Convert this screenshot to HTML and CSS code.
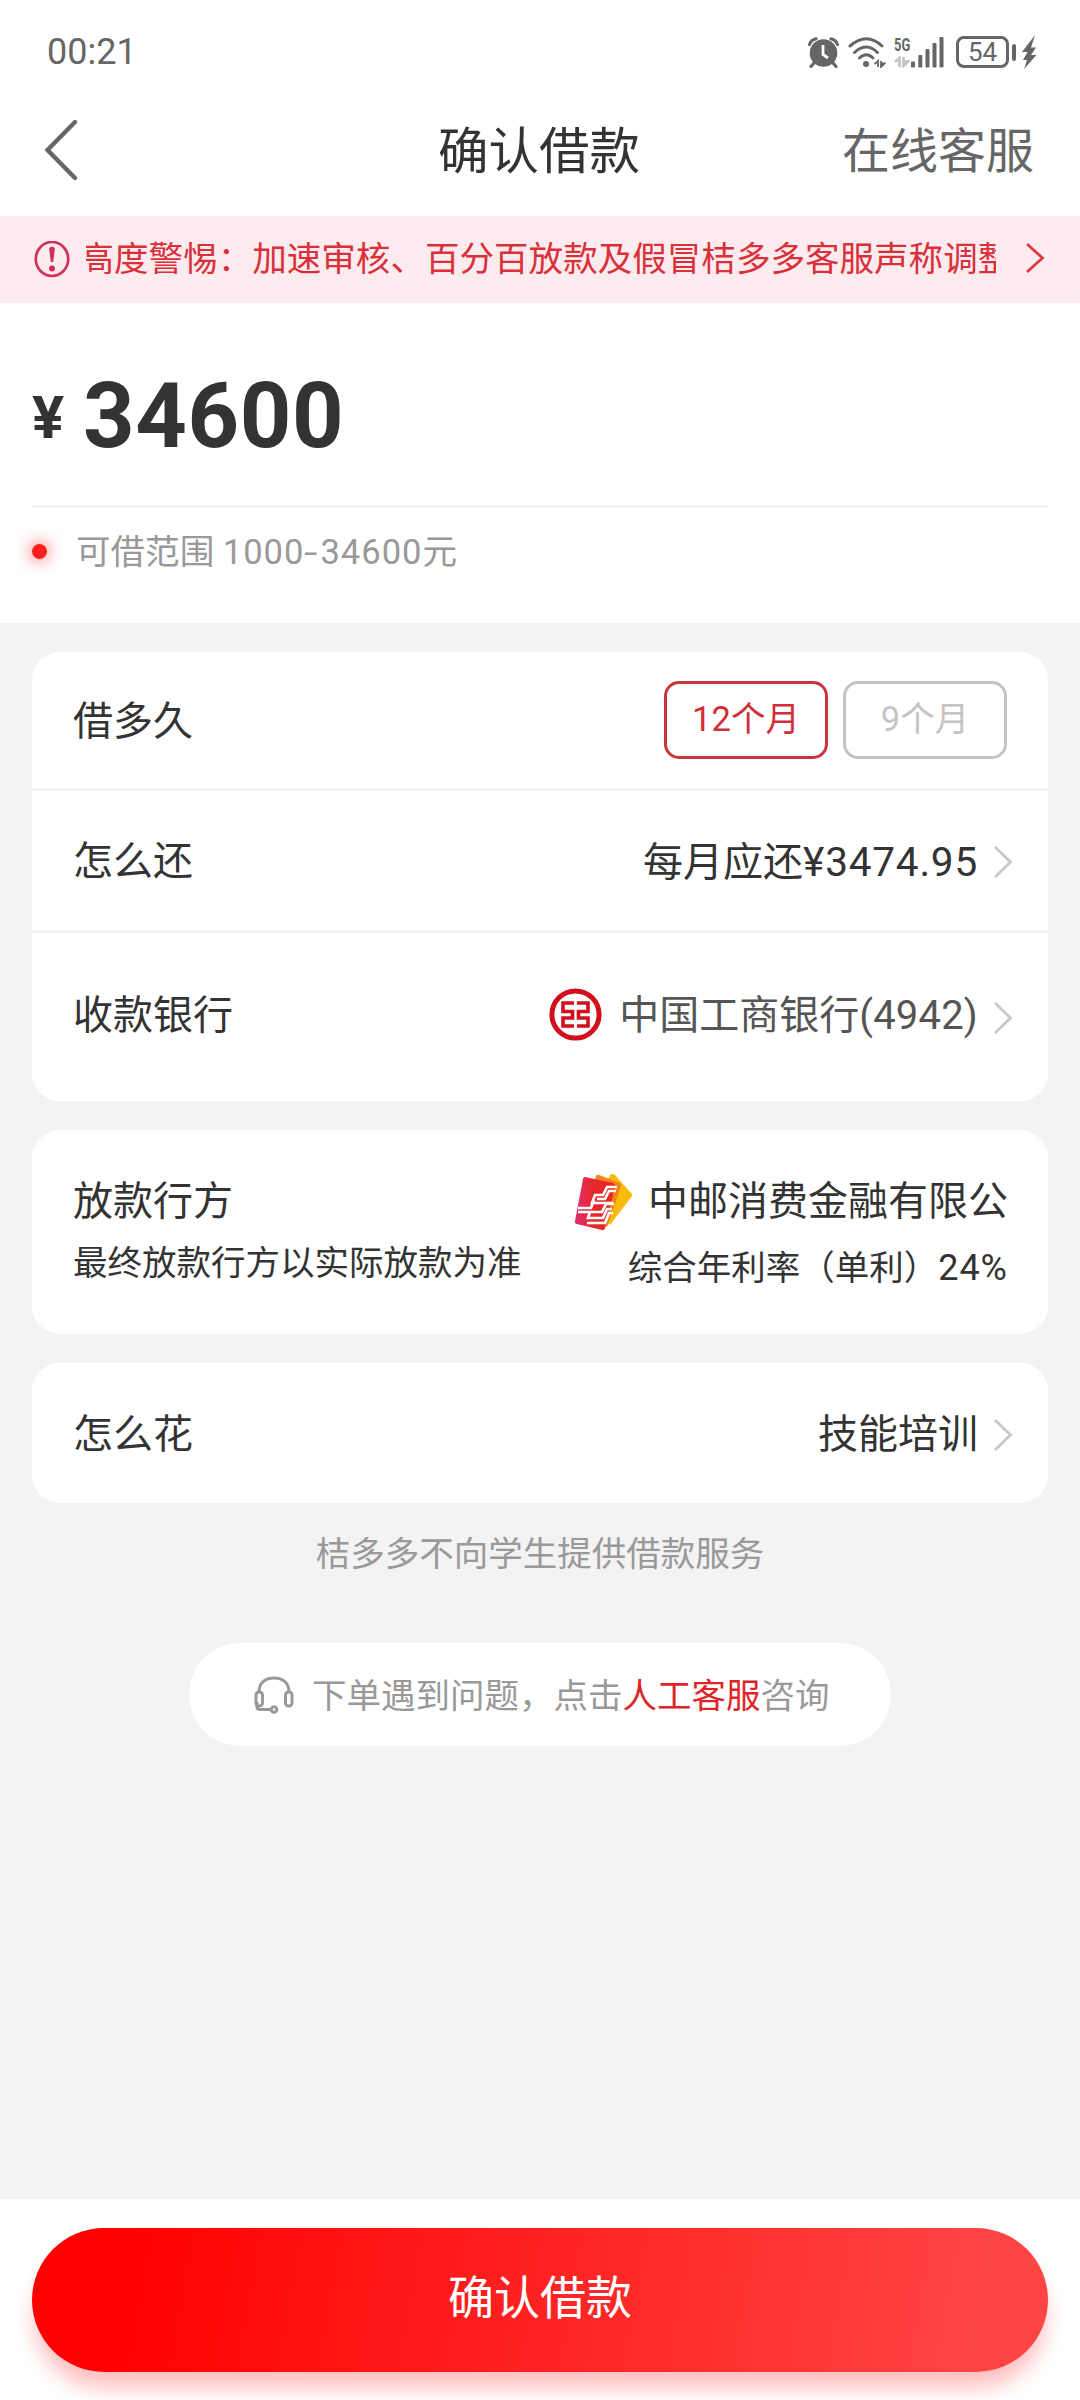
FILE: index.html
```html
<!DOCTYPE html>
<html lang="zh-CN">
<head>
<meta charset="utf-8">
<title>确认借款</title>
<link rel="stylesheet" href="styles.css">
</head>
<body>
<div class="page">
  <div class="status">
    <span class="time">00:21</span>
    <div class="status-icons">
      <svg class="alarm" width="31" height="31" viewBox="0 0 31 31">
        <circle cx="15.5" cy="16" r="13.8" fill="#666"/>
        <path d="M1.5 7.5Q3 3 8 1.8M29.500 7.500Q28 3 23 1.800M6 26l-3 3.500M25 26l3 3.500" stroke="#666" stroke-width="3.200" fill="none" stroke-linecap="round"/>
        <path d="M15 8v9.500l5 3.500" stroke="#fff" stroke-width="2.800" fill="none"/>
      </svg>
      <svg class="wifi" width="38" height="31" viewBox="0 0 38 31">
        <g fill="none" stroke="#666" stroke-width="3" stroke-linecap="round">
          <path d="M2 9Q18.500-5.500 34 9"/><path d="M6.500 15.500Q18.500 4.500 29.500 15.500"/><path d="M11.500 21Q18.500 14.500 25 21"/>
        </g>
        <circle cx="18" cy="27" r="3" fill="#666"/>
        <path d="M26.500 27l3.500-3v6M33 24v6l3.500-3.500h-3" fill="none" stroke="#666" stroke-width="1.800"/>
      </svg>
      <div class="net">
        <span class="net-label">5G</span>
        <svg width="16" height="12" viewBox="0 0 16 12"><path d="M1 6l4.500-4v9M9.500 1v9l4.500-4.500h-4" fill="none" stroke="#c4c4c4" stroke-width="2.600"/></svg>
      </div>
      <svg class="bars" width="34" height="31" viewBox="0 0 34 31">
        <g fill="#666"><rect x="0" y="24.500" width="4" height="6" rx="1"/><rect x="7.300" y="18" width="4" height="12.500" rx="1"/><rect x="14.500" y="12" width="4" height="18.500" rx="1"/><rect x="21.500" y="6" width="4" height="24.500" rx="1"/><rect x="28.500" y="0" width="4" height="30.500" rx="1"/></g>
      </svg>
      <span class="battery">54</span>
      <span class="nub"></span>
      <svg class="bolt" width="15" height="34" viewBox="0 0 15 34"><path d="M13 0L0 17h5.500L1 25h4L2 34 14.500 20H9L14 12.500H9z" fill="#666"/></svg>
    </div>
  </div>

  <header class="header">
    <svg class="back" width="36" height="64" viewBox="0 0 36 64"><path d="M33 4L5.500 32 33 60" fill="none" stroke="#666" stroke-width="4.400" stroke-linecap="round"/></svg>
    <h1 class="title">确认借款</h1>
    <span class="service">在线客服</span>
  </header>

  <div class="notice">
    <svg class="warn" width="36" height="38" viewBox="0 0 36 38"><ellipse cx="18" cy="18" rx="16.200" ry="17" fill="none" stroke="#cf3059" stroke-width="2.600"/><path d="M15.200 8q0-2.200 2.800-2.200t2.800 2.200l-1.600 13h-2.400z" fill="#cf3059"/><circle cx="18" cy="27.500" r="3" fill="#cf3059"/></svg>
    <div class="notice-text">高度警惕：加速审核、百分百放款及假冒桔多多客服声称调整</div>
    <svg class="notice-arrow" width="20" height="32" viewBox="0 0 20 32"><path d="M2 2l15.500 14L2 30" fill="none" stroke="#dc3a43" stroke-width="2.800"/></svg>
  </div>

  <section class="amount">
    <div class="sum"><span class="yen">¥</span><span class="value">34600</span></div>
    <div class="range"><span class="dot"></span><span class="range-text">可借范围 <span class="range-num">1000<span class="dash">-</span>34600</span>元</span></div>
  </section>

  <main class="content">
    <section class="card">
      <div class="row term">
        <span>借多久</span>
        <div class="chips"><span class="chip active">12个月</span><span class="chip">9个月</span></div>
      </div>
      <div class="row repay">
        <span>怎么还</span>
        <div class="val"><span>每月应还<span class="money">¥3474.95</span></span><svg class="arrow" width="20" height="34" viewBox="0 0 20 34"><path d="M2 2l15.500 15L2 32" fill="none" stroke="#c8c8c8" stroke-width="2.800"/></svg></div>
      </div>
      <div class="row bank">
        <span>收款银行</span>
        <div class="val gray">
          <svg class="icbc" width="53" height="53" viewBox="0 0 53 53">
            <circle cx="26.500" cy="26.500" r="23.600" fill="#fff" stroke="#d0101e" stroke-width="5"/>
            <g fill="none" stroke="#d0101e" stroke-width="3.600">
              <path d="M25 15H14v8.500h9.500v6.500H14v8h11"/>
              <path d="M28 15h11v8.500h-9.500v6.500H39v8H28"/>
            </g>
          </svg>
          <span>中国工商银行<span class="tail">(4942)</span></span>
          <svg class="arrow low" width="20" height="34" viewBox="0 0 20 34"><path d="M2 2l15.500 15L2 32" fill="none" stroke="#c8c8c8" stroke-width="2.800"/></svg>
        </div>
      </div>
    </section>

    <section class="card lender">
      <div class="lender-left">
        <span class="lender-main">放款行方</span>
        <span class="lender-sub">最终放款行方以实际放款为准</span>
      </div>
      <div class="lender-right">
        <div class="lender-main company">
          <svg class="post" width="60" height="58" viewBox="0 0 60 58">
            <defs><linearGradient id="red" x1="0" x2="1"><stop offset="0" stop-color="#e03070"/><stop offset=".45" stop-color="#e5282b"/><stop offset="1" stop-color="#e8291c"/></linearGradient></defs>
            <path d="M36 2q2-2 5 0l17 19q1 1 0 2L36 52 20 40z" fill="#fbbb0c"/>
            <path d="M22 3q1-2 3-1l21 8q2 1 1 3L33 54 12 44z" fill="#f58216"/>
            <path d="M9 6q0-2 2-2l28 6q3 1 2 4L31 55q-1 3-3 2L3 51q-3-1-2-3z" fill="url(#red)"/>
            <g fill="none" stroke="#fff" stroke-width="2.700"><path d="M43 14H33l-4 8h-8l-3 8h21"/><path d="M42 18h-7l-4 8h-8"/><path d="M4 35h13l3-8M4 39h24l4-8h8"/><path d="M16 39l-2 6h15l4-9h5"/><path d="M13 50h18l4-10h4"/></g>
          </svg>
          <span>中邮消费金融有限公</span>
        </div>
        <span class="lender-sub">综合年利率（单利）<span class="rate">24%</span></span>
      </div>
    </section>

    <section class="card">
      <div class="row usage">
        <span>怎么花</span>
        <div class="val"><span>技能培训</span><svg class="arrow" width="20" height="34" viewBox="0 0 20 34"><path d="M2 2l15.500 15L2 32" fill="none" stroke="#c8c8c8" stroke-width="2.800"/></svg></div>
      </div>
    </section>

    <p class="note">桔多多不向学生提供借款服务</p>

    <div class="help">
      <svg width="40" height="38" viewBox="0 0 40 38"><g fill="none" stroke="#999" stroke-width="3"><path d="M5 16C5 7 11 2 20 2s15 5 15 14"/><rect x="2" y="16" width="6.500" height="14" rx="3"/><rect x="31.500" y="16" width="6.500" height="14" rx="3"/><path d="M3 26v5q0 2.500 3 2.500h11"/><circle cx="20" cy="33.500" r="2.800"/></g></svg>
      <span class="help-text">下单遇到问题，点击<span class="link">人工客服</span>咨询</span>
    </div>
  </main>

  <footer class="footer"><button class="confirm">确认借款</button></footer>
</div>
</body>
</html>
```
FILE: styles.css
```css
* { box-sizing: border-box; }
body {
  margin: 0;
  background: #f3f3f3;
  color: #333;
  font-family: Roboto, "Noto Sans CJK SC", sans-serif;
}
svg { display: block; flex: none; }
.page {
  width: 1080px;
  height: 2400px;
  display: flex;
  flex-direction: column;
  overflow: hidden;
  white-space: nowrap;
}

.status {
  height: 84px;
  padding: 20px 43px 0 47px;
  background: #fff;
  display: flex;
  justify-content: space-between;
  align-items: center;
  color: #666;
}
.time { font-size: 36px; line-height: 40px; letter-spacing: 0; }
.status-icons { display: flex; align-items: center; }
.wifi { margin-left: 9px; }
.net { width: 16px; height: 31px; margin-left: 8px; display: flex; flex-direction: column; justify-content: space-between; }
.net-label { font-size: 19px; line-height: 15px; font-weight: 700; transform: scaleX(.68); transform-origin: left; }
.bars { margin-left: 1px; }
.battery {
  width: 53px;
  height: 32px;
  margin-left: 11px;
  border: 3px solid #666;
  border-radius: 8px;
  font-size: 26px;
  line-height: 27px;
  text-align: center;
}
.nub { width: 4px; height: 17px; margin-left: 3px; border-radius: 2px; background: #666; }
.bolt { margin-left: 6px; }

.header {
  height: 132px;
  padding: 0 46px 0 42px;
  background: #fff;
  display: grid;
  grid-template-columns: 1fr auto 1fr;
  align-items: center;
}
.title { margin: 0; padding: 3px 0 0 2px; font-size: 50.500px; line-height: 60px; font-weight: 400; }
.service { justify-self: end; padding-top: 3px; font-size: 48px; line-height: 60px; color: #666; }

.notice {
  height: 87px;
  padding: 0 35px 0 34px;
  background: #feebef;
  display: flex;
  align-items: center;
  color: #d9303a;
}
.notice-text {
  width: 911px;
  margin-left: 16px;
  padding-bottom: 2px;
  overflow: hidden;
  text-indent: -6.500px;
  font-size: 34.550px;
  line-height: 48px;
}
.notice-arrow { margin: 0 0 4px 29px; }

.amount { height: 320px; padding: 0 32px; background: #fff; }
.sum {
  height: 205px;
  padding-top: 61px;
  border-bottom: 3px solid #f3f3f3;
  display: flex;
  align-items: baseline;
  font-weight: 700;
  line-height: 106px;
}
.yen { width: 51px; font-size: 60px; position: relative; top: -9px; }
.value { font-size: 90px; letter-spacing: .6px; }
.range { height: 86px; display: flex; align-items: center; color: #999; font-size: 34.550px; }
.range-text { padding-bottom: 5px; }
.range-num { letter-spacing: 1px; }
.dash { display: inline-block; width: 16px; transform: scaleX(1.400); transform-origin: left; letter-spacing: 0; }
.dot { width: 15px; height: 15px; margin-right: 29px; border-radius: 50%; background: #ff1e1e; box-shadow: 0 0 16px 2px rgba(255, 40, 40, .6); }

.content { flex: 1; padding: 29px 32px 0; display: flex; flex-direction: column; align-items: stretch; }
.card { margin-bottom: 29px; border-radius: 28px; background: #fff; }
.row {
  padding: 3px 41px 0 41px;
  display: flex;
  align-items: center;
  justify-content: space-between;
  font-size: 40px;
  line-height: 56px;
}
.row + .row { border-top: 3px solid #f3f3f3; }
.term { height: 136px; }
.repay { height: 142px; }
.bank { height: 171px; padding-bottom: 5px; }
.usage { height: 140px; }
.chips { display: flex; gap: 15px; margin-top: -3px; }
.chip {
  width: 164px;
  height: 78px;
  border: 3px solid #c4c4c4;
  border-radius: 15px;
  color: #c4c4c4;
  font-size: 34.500px;
  line-height: 70px;
  text-align: center;
}
.chip.active { border-color: #c8353c; color: #d02f37; }
.val { display: flex; align-items: center; margin-right: -6px; }
.gray { color: #555; }
.money { letter-spacing: .8px; font-size: 40.500px; }
.arrow { margin-left: 15px; }
.low { margin-top: 4px; }
.icbc { margin: 0 17px 3px 0; }
.tail { letter-spacing: .2px; }

.lender { height: 204px; padding: 0 40px 0 41px; display: flex; justify-content: space-between; }
.lender-left, .lender-right { display: flex; flex-direction: column; padding-top: 44px; }
.lender-right { align-items: flex-end; padding-top: 43px; }
.lender-main { font-size: 40px; line-height: 56px; }
.lender-sub { font-size: 34.500px; line-height: 48px; margin-top: 9px; }
.lender-right .lender-sub { margin-top: 13px; }
.company { display: flex; align-items: center; }
.post { margin-right: 14px; }
.rate { letter-spacing: 1px; font-size: 36px; }

.note { margin: -31px 0 0; text-align: center; font-size: 34.500px; line-height: 106px; color: #999; }
.help {
  width: 702px;
  height: 103px;
  margin: 36px auto 0;
  padding-left: 65px;
  border-radius: 52px;
  background: #fff;
  display: flex;
  align-items: center;
  gap: 18px;
  color: #999;
  font-size: 34.500px;
}
.help-text { padding-bottom: 3px; }
.link { color: #dd2529; }

.footer { height: 201px; padding: 29px 32px 0; background: #fff; }
.confirm {
  display: block;
  width: 100%;
  height: 144px;
  padding: 0;
  border: 0;
  border-radius: 72px;
  background: linear-gradient(100deg, #f00 8%, #ff4444 92%);
  box-shadow: 0 18px 20px -2px rgba(255, 60, 60, .32);
  color: #fff;
  font: 400 46px/141px Roboto, "Noto Sans CJK SC", sans-serif;
}
.confirm { padding-bottom: 3px; }
```
